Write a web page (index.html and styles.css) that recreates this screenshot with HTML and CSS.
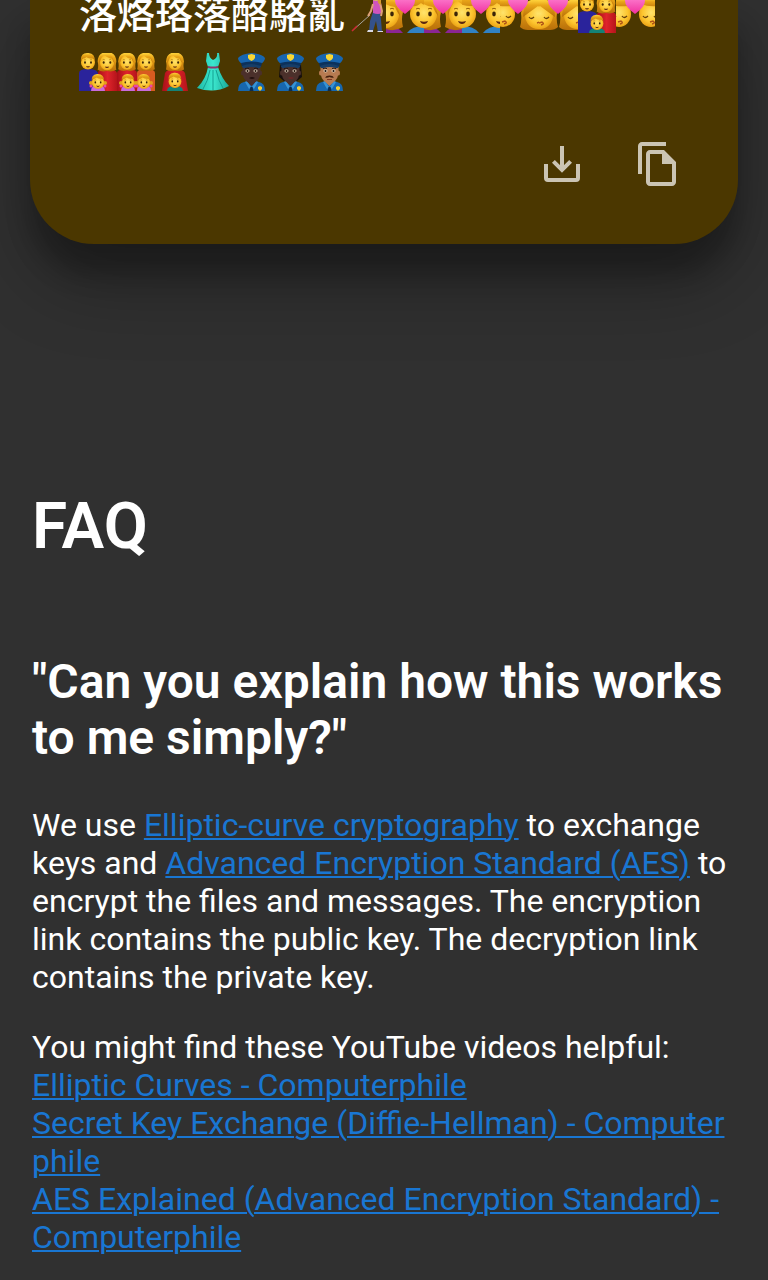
FILE: index.html
```
<!DOCTYPE html>
<html lang="en">
<head>
<meta charset="utf-8">
<meta name="viewport" content="width=device-width, initial-scale=1">
<title>FAQ</title>
<link rel="stylesheet" href="styles.css">
</head>
<body>
<svg class="sprite" aria-hidden="true">
  <defs>
    <radialGradient id="skin" cx=".5" cy=".45" r=".6"><stop offset="0" stop-color="#ffe36b"/><stop offset=".6" stop-color="#fdc52f"/><stop offset="1" stop-color="#e69a10"/></radialGradient>
    <linearGradient id="hair" x2="0" y2="1"><stop offset="0" stop-color="#ffd43c"/><stop offset=".3" stop-color="#e9a518"/><stop offset="1" stop-color="#b86f09"/></linearGradient>
    <linearGradient id="pink" x2="0" y2="1"><stop offset="0" stop-color="#ff8bd8"/><stop offset="1" stop-color="#f0309f"/></linearGradient>
    <linearGradient id="teal" x2="1"><stop offset="0" stop-color="#20b9a6"/><stop offset=".5" stop-color="#3ce8cf"/><stop offset="1" stop-color="#1ca797"/></linearGradient>
    <linearGradient id="red" x2="1"><stop offset="0" stop-color="#a80f18"/><stop offset=".5" stop-color="#df242b"/><stop offset="1" stop-color="#b5141b"/></linearGradient>

    <g id="features">
      <ellipse cx="-6" cy="1" rx="1.800" ry="2.400" fill="#3b2508"/><ellipse cx="6" cy="1" rx="1.800" ry="2.400" fill="#3b2508"/>
      <path d="M-8-4q2-1.500 4 0M8-4q-2-1.500-4 0" fill="none" stroke="#97610a"/>
      <path d="M-4 8q4 1.400 8 0-1 3-4 3t-4-3z" fill="#5b2710"/>
    </g>
    <g id="man">
      <ellipse rx="14" ry="14" cy="1" fill="url(#skin)"/>
      <path d="M-14-1q-2-16 12-17 16-1 16 17l-3-6q-11 0-14-3-5 4-8 3z" fill="url(#hair)"/>
      <use href="#features"/>
    </g>
    <g id="woman">
      <path d="M-17 14q2-8 0-15Q-16-18 0-18T17-1q-2 7 0 15-9 5-17 2-9 3-17-2z" fill="url(#hair)"/>
      <ellipse rx="13" ry="14" cy="1" fill="url(#skin)"/>
      <path d="M-14 3q-2-18 9-19 16-1 19 19-3-4-5-9-9-1-14-7-6 4-9 16z" fill="url(#hair)"/>
      <use href="#features"/>
    </g>
    <g id="man-kiss">
      <ellipse rx="12" ry="13" cy="-3" fill="url(#skin)"/>
      <path d="M-13-7q-2-9 7-11 18-4 19 11l-4-4q-14 1-17-2-2 3-5 6z" fill="url(#hair)"/>
      <path d="M-8-1q2 3 5 0M3-1q2 3 5 0" fill="none" stroke="#65400b" stroke-width="1.300"/><path d="M-1 5l3-1q3 2-1 3" fill="none" stroke="#b05418" stroke-width="1.500"/>
    </g>
    <g id="woman-kiss">
      <path d="M-18 10q2-6 1-14Q-15-18 0-18T17-4q-1 8 1 14-3 3-8 3h-20q-5 0-8-3z" fill="url(#hair)"/>
      <ellipse rx="13" ry="14" cy="-2" fill="url(#skin)"/>
      <path d="M-15 0q0-16 15-17 15 1 15 17L0-11z" fill="url(#hair)"/>
      <path d="M-9 0q2 3 5 0M4 0q2 3 5 0" fill="none" stroke="#65400b" stroke-width="1.300"/><path d="M-1 6l3-1q3 2-1 3" fill="none" stroke="#b05418" stroke-width="1.500"/>
    </g>
    <path id="heart" d="M0 10Q-11 2-10-5q1-5 6-5 3 0 4 3 1-3 4-3 5 0 6 5Q11 2 0 10z" fill="url(#pink)"/>
    <g id="girl">
      <path d="M-7 9q0-6 7-6t7 6z" fill="#c86bdc"/>
      <circle cx="-7" cy="1" r="2" fill="#e3a01a"/><circle cx="7" cy="1" r="2" fill="#e3a01a"/>
      <circle cx="-7" cy="4" r="1.500" fill="#ed45a8"/><circle cx="7" cy="4" r="1.500" fill="#ed45a8"/>
      <g transform="scale(.45)"><use href="#man"/></g>
    </g>
    <g id="boy"><path d="M-8 10q0-5 8-5t8 5z" fill="#148276"/><g transform="scale(.46)"><use href="#man"/></g></g>
    <g id="officer">
      <path d="M5 38q0-8 6-9l8-2 7 2q6 1 6 9z" fill="#1767ae"/>
      <path d="M14 29l4.500 4 4.500-4v-4h-9z" fill="currentColor"/><path d="M12 29l2-1 4 6-2 2zM25 29l-2-1-4 6 2 2z" fill="#3893d3"/>
      <path d="M17.500 34h2l1 4h-4z" fill="#0b2d50"/><path d="M25 34l2-1 2 1v2l-2 2-2-2z" fill="#f6cf30"/>
      <ellipse cx="9.500" cy="20" rx="1.500" ry="2.500" fill="currentColor"/><ellipse cx="27.500" cy="20" rx="1.500" ry="2.500" fill="currentColor"/>
      <path d="M9.500 12h18v9q-2 9-9 9t-9-9z" fill="currentColor"/>
      <ellipse cx="14.500" cy="18" rx="2" ry="1.400" fill="#efe0ca"/><ellipse cx="22.500" cy="18" rx="2" ry="1.400" fill="#efe0ca"/><circle cx="14.500" cy="18" r="1.100" fill="#1d0e08"/><circle cx="22.500" cy="18" r="1.100" fill="#1d0e08"/>
      <path d="M12 15.500q2-1 4 0M25 15.500q-2-1-4 0" fill="none" stroke="#23130c"/>
      <path d="M5 5Q8 1 18.500 0 29 1 32 5q0 3-4 6v3q-9-3-19 0v-3Q5 8 5 5z" fill="#1866b0"/>
      <path d="M8 10q10-3 21 0l-1 4q-9-4-19 0z" fill="#0c315b"/><path d="M9 13q9-4 19 0-1 3-3 2-6-2-13 0-2 1-3-2z" fill="#173e68"/>
      <path d="M15 2l3.500-1L22 2v3q-1 2-3.500 3Q16 7 15 5z" fill="#f8d734"/>
    </g>
  </defs>
</svg>

<section class="card">
  <div class="message">
    <span class="message-text" lang="zh-Hant">洛烙珞落酪駱亂</span>
    <svg class="emoji emoji-cane" viewBox="0 0 41 38" role="img" aria-label="Woman with white cane">
      <path d="M7 36L25 20" stroke="#a4a39e" stroke-width="1"/><path d="M7 36l5-5" stroke="#cf2633" stroke-width="1.500"/>
      <path d="M28 17l-3 9-1 10h4l3-10 2 11h4l-1-12-1-8z" fill="#34518a"/><path d="M23 35h5v2h-6zM33 36h5v1h-6z" fill="#d8d8e2"/>
      <path d="M28 5q5-3 8 2l1 11q-4 2-9 0z" fill="#cf54bd"/><path d="M28 9l-2 7-3 5M35 8l2 8-1 5" fill="none" stroke="#dca077" stroke-width="2"/>
      <circle cx="31" cy="2" r="4" fill="#deb068"/><path d="M32 0l4 2v8l-3-2z" fill="#d69a31"/>
    </svg>
    <svg class="emoji" viewBox="0 0 38 38" role="img" aria-label="Woman and man with heart"><path d="M0 31q12 0 17 7H0z" fill="#8b2594"/><path d="M38 31q-12 0-17 7h17z" fill="#3182c4"/><use href="#woman" x="0" y="18"/><use href="#man" x="38" y="18"/><use href="#heart" x="19" y="9"/></svg>
    <svg class="emoji" viewBox="0 0 38 38" role="img" aria-label="Two women with heart"><path d="M0 31q12 0 17 7H0zM38 31q-12 0-17 7h17z" fill="#8b2594"/><use href="#woman" x="0" y="18"/><use href="#woman" x="38" y="18"/><use href="#heart" x="19" y="9"/></svg>
    <svg class="emoji" viewBox="0 0 38 38" role="img" aria-label="Two men with heart"><path d="M0 31q12 0 17 7H0zM38 31q-12 0-17 7h17z" fill="#3182c4"/><use href="#man" x="0" y="18"/><use href="#man" x="38" y="18"/><use href="#heart" x="19" y="9"/></svg>
    <svg class="emoji emoji-wide" viewBox="0 0 39 38" role="img" aria-label="Kiss: man and woman"><use href="#man-kiss" x="3" y="22"/><use href="#woman-kiss" x="38" y="22"/><use href="#heart" x="18" y="9"/></svg>
    <svg class="emoji emoji-wide" viewBox="0 0 39 38" role="img" aria-label="Kiss: two women"><use href="#woman-kiss" x="1" y="22"/><use href="#woman-kiss" x="38" y="22"/><use href="#heart" x="19" y="9"/></svg>
    <svg class="emoji" viewBox="0 0 38 38" role="img" aria-label="Family with boy"><path d="M0 38V20q0-4 9-4t10 4v18z" fill="#2a239b"/><path d="M19 38V20q0-4 9-4t10 4v18z" fill="url(#red)"/><use href="#man" transform="translate(9 9) scale(.5)"/><use href="#woman" transform="translate(28 9) scale(.55)"/><use href="#boy" x="19" y="28"/></svg>
    <svg class="emoji emoji-wide" viewBox="0 0 39 38" role="img" aria-label="Kiss: two men"><use href="#man-kiss" x="3" y="22"/><use href="#man-kiss" x="35" y="22"/><use href="#heart" x="19" y="9"/></svg>
    <svg class="emoji" viewBox="0 0 38 38" role="img" aria-label="Family with girl"><path d="M0 38V20q0-4 9-4t10 4v18z" fill="#2a239b"/><path d="M19 38V20q0-4 9-4t10 4v18z" fill="url(#red)"/><use href="#man" transform="translate(9 9) scale(.5)"/><use href="#woman" transform="translate(28 9) scale(.55)"/><use href="#girl" x="19" y="29"/></svg>
    <svg class="emoji" viewBox="0 0 38 38" role="img" aria-label="Two women with two girls"><path d="M0 38V20q0-4 10-4t10 4v18z" fill="url(#red)"/><path d="M20 38V20q0-4 9-4t9 4v18z" fill="#d85b20"/><use href="#woman" transform="translate(10 9) scale(.52)"/><use href="#woman" transform="translate(29 9) scale(.52)"/><use href="#girl" x="11" y="29"/><use href="#girl" x="27" y="29"/></svg>
    <svg class="emoji emoji-wide" viewBox="0 0 39 38" role="img" aria-label="Woman with boy"><path d="M7 38l3-18q2-4 10-4t10 4l3 18z" fill="url(#red)"/><use href="#woman" transform="translate(20 9) scale(.53)"/><use href="#boy" x="20" y="28"/></svg>
    <svg class="emoji emoji-wide" viewBox="0 0 39 38" role="img" aria-label="Dress"><path d="M15 0q0 5 4 7 5-2 4-7h2l1 8-2 6q4 12 11 19-15 8-32 2Q12 26 14 14l-2-6 1-8z" fill="url(#teal)"/><path d="M14 13q5 1 10 0v2q-5 1-10 0z" fill="#8e376d"/><path d="M16 17Q14 28 9 36M19 17v20M22 17q3 12 7 18" fill="none" stroke="#159d90"/></svg>
    <svg class="emoji emoji-wide emoji-dark" viewBox="0 0 39 38" role="img" aria-label="Police officer"><use href="#officer"/><path d="M16 25q3-2 6 0-3 2-6 0z" fill="#23110f"/></svg>
    <svg class="emoji emoji-wide emoji-dark" viewBox="0 0 39 38" role="img" aria-label="Woman police officer"><path d="M8 12h21l1 12-5 4H12l-5-4z" fill="#17100e"/><use href="#officer"/><path d="M16 25q3-2 6 0-3 2-6 0z" fill="#6b2929"/></svg>
    <svg class="emoji emoji-wide emoji-medium" viewBox="0 0 39 38" role="img" aria-label="Man police officer"><use href="#officer"/><path d="M14 24.500q1-2 4.500-2t4.500 2q-2.500.5-4.500-.5-2 1-4.500.5z" fill="#45210e"/><path d="M16 26.500h5" stroke="#823922"/></svg>
  </div>
  <div class="actions">
    <button class="icon-button" type="button" aria-label="Download">
      <svg class="icon" viewBox="0 0 24 24" fill="none" stroke="currentColor" stroke-width="2"><path d="M12 3v12M7.700 10.700l4.300 4.300 4.300-4.300M4 12v7q0 1 1 1h14q1 0 1-1v-7"/></svg>
    </button>
    <button class="icon-button" type="button" aria-label="Copy">
      <svg class="icon" viewBox="0 0 24 24" fill="currentColor"><path d="M16 1H4c-1.100 0-2 .9-2 2v14h2V3h12V1zm-1 4H8c-1.100 0-1.990.9-1.990 2L6 21c0 1.100.89 2 1.990 2H19c1.100 0 2-.9 2-2V11l-6-6zM8 21V7h6v5h5v9H8z"/></svg>
    </button>
  </div>
</section>

<main class="faq">
  <h1>FAQ</h1>
  <h2>"Can you explain how this works to me simply?"</h2>
  <p>We use <a href="#ecc">Elliptic-curve cryptography</a> to exchange keys and <a href="#aes">Advanced Encryption Standard (AES)</a> to encrypt the files and messages. The encryption link contains the public key. The decryption link contains the private key.</p>
  <p>You might find these YouTube videos helpful:<br>
    <a href="#curves">Elliptic Curves - Computerphile</a><br>
    <a href="#exchange">Secret Key Exchange (Diffie-Hellman) - Computerphile</a><br>
    <a href="#standard">AES Explained (Advanced Encryption Standard) - Computerphile</a></p>
</main>
</body>
</html>
```
FILE: styles.css
```
* {
  box-sizing: border-box;
}

body {
  margin: 0;
  background: #303030;
  color: #fff;
  font-family: Roboto, "Noto Sans CJK TC", sans-serif;
  font-size: 32px;
  line-height: 38px;
}

.sprite {
  display: block;
  width: 0;
  height: 0;
}

.card {
  margin: 0 30px;
  padding: 0 49px 44px;
  background: #4b3700;
  border-radius: 0 0 64px 64px;
  box-shadow: 0 38px 76px rgba(0, 0, 0, .3), 0 30px 24px rgba(0, 0, 0, .22);
}

.card::before {
  content: "";
  display: table;
}

.message {
  display: flex;
  flex-wrap: wrap;
  align-items: flex-start;
  margin-top: -15px;
}

.message-text {
  font-family: "Noto Sans CJK TC", sans-serif;
  font-size: 38px;
  font-weight: 500;
  line-height: 54px;
}

.emoji {
  width: 38px;
  height: 38px;
  margin: 10px 0;
}

.emoji-wide {
  width: 39px;
}

.emoji-cane {
  width: 41px;
}

.emoji-dark {
  color: #4b302b;
}

.emoji-medium {
  color: #b77b51;
}

.actions {
  display: flex;
  justify-content: flex-end;
  gap: 24px;
  margin: 27px -5px 0 0;
}

.icon-button {
  display: flex;
  padding: 12px;
  border: 0;
  border-radius: 50%;
  background: none;
  color: #cbc4b3;
}

.icon {
  width: 48px;
  height: 48px;
}

.faq {
  padding: 245px 32px 24px;
}

h1 {
  margin: 0 0 90px;
  font-size: 64px;
  font-weight: 600;
  line-height: 75px;
}

h2 {
  margin: 0 0 40px;
  font-size: 48px;
  font-weight: 600;
  line-height: 56px;
}

p {
  margin: 0 0 32px;
}

a {
  color: #1976d2;
  text-decoration: underline;
  text-decoration-thickness: 2px;
  text-underline-offset: 2px;
  word-break: break-all;
}
```
